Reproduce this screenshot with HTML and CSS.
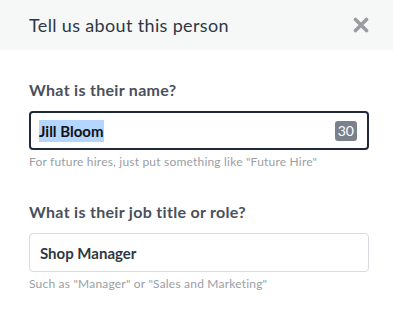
FILE: index.html
```html
<!DOCTYPE html>
<html>
<head>
<meta charset="utf-8">
<link rel="stylesheet" href="styles.css">
</head>
<body>
<div class="modal">
  <header class="modal-header">
    <h1 class="modal-title">Tell us about this person</h1>
    <button class="close" aria-label="Close">
      <svg width="16" height="16" viewBox="0 0 16 16"><path d="M2.5 2.5 L13.5 13.5 M13.5 2.5 L2.5 13.5" stroke="#999da3" stroke-width="3.6" stroke-linecap="round"/></svg>
    </button>
  </header>
  <div class="modal-body">
    <div class="field">
      <label class="label">What is their name?</label>
      <div class="input focused">
        <span class="value"><span class="selected">Jill Bloom</span></span>
        <span class="counter">30</span>
      </div>
      <div class="help">For future hires, just put something like "Future Hire"</div>
    </div>
    <div class="field">
      <label class="label">What is their job title or role?</label>
      <div class="input">
        <span class="value">Shop Manager</span>
      </div>
      <div class="help">Such as "Manager" or "Sales and Marketing"</div>
    </div>
  </div>
</div>
</body>
</html>
```
FILE: styles.css
```css
* { box-sizing: border-box; }
html, body { margin: 0; padding: 0; background: #fff; }
body { font-family: Lato, "Open Sans", sans-serif; color: #2d3440; }
.modal { width: 393px; }
.modal-header {
  height: 50px;
  background: #f6f7f7;
  display: flex;
  align-items: center;
  justify-content: space-between;
  padding: 0 24px 0 29px;
}
.modal-title { margin: 0; font-size: 18px; font-weight: 400; color: #2f3744; letter-spacing: 0.35px; }
.close { border: 0; background: none; padding: 0; display: flex; }
.modal-body { padding: 30px 24px 0 29px; }
.field + .field { margin-top: 33px; }
.label { display: block; font-size: 16px; line-height: 20px; font-weight: 700; color: #4a505c; margin-bottom: 11px; letter-spacing: 0.3px; }
.input {
  height: 39px;
  border: 1px solid #d8dbe0;
  border-radius: 4px;
  display: flex;
  align-items: center;
  padding: 0 11px 0 10px;
}
.input.focused { border: 2px solid #1f2937; padding: 0 10px 0 8px; }
.value { flex: 1; font-size: 15px; font-weight: 700; color: #2f3744; }
.focused .value { color: #111; }
.selected { background: #b4d5fe; padding: 2px 0; }
.counter {
  background: #7a818b; color: #fff; font-size: 14px;
  border-radius: 3px; padding: 1px 3px; line-height: 18px;
}
.help { margin-top: 4px; font-size: 12px; line-height: 15px; color: #9a9ea5; letter-spacing: 0.2px; }
```
